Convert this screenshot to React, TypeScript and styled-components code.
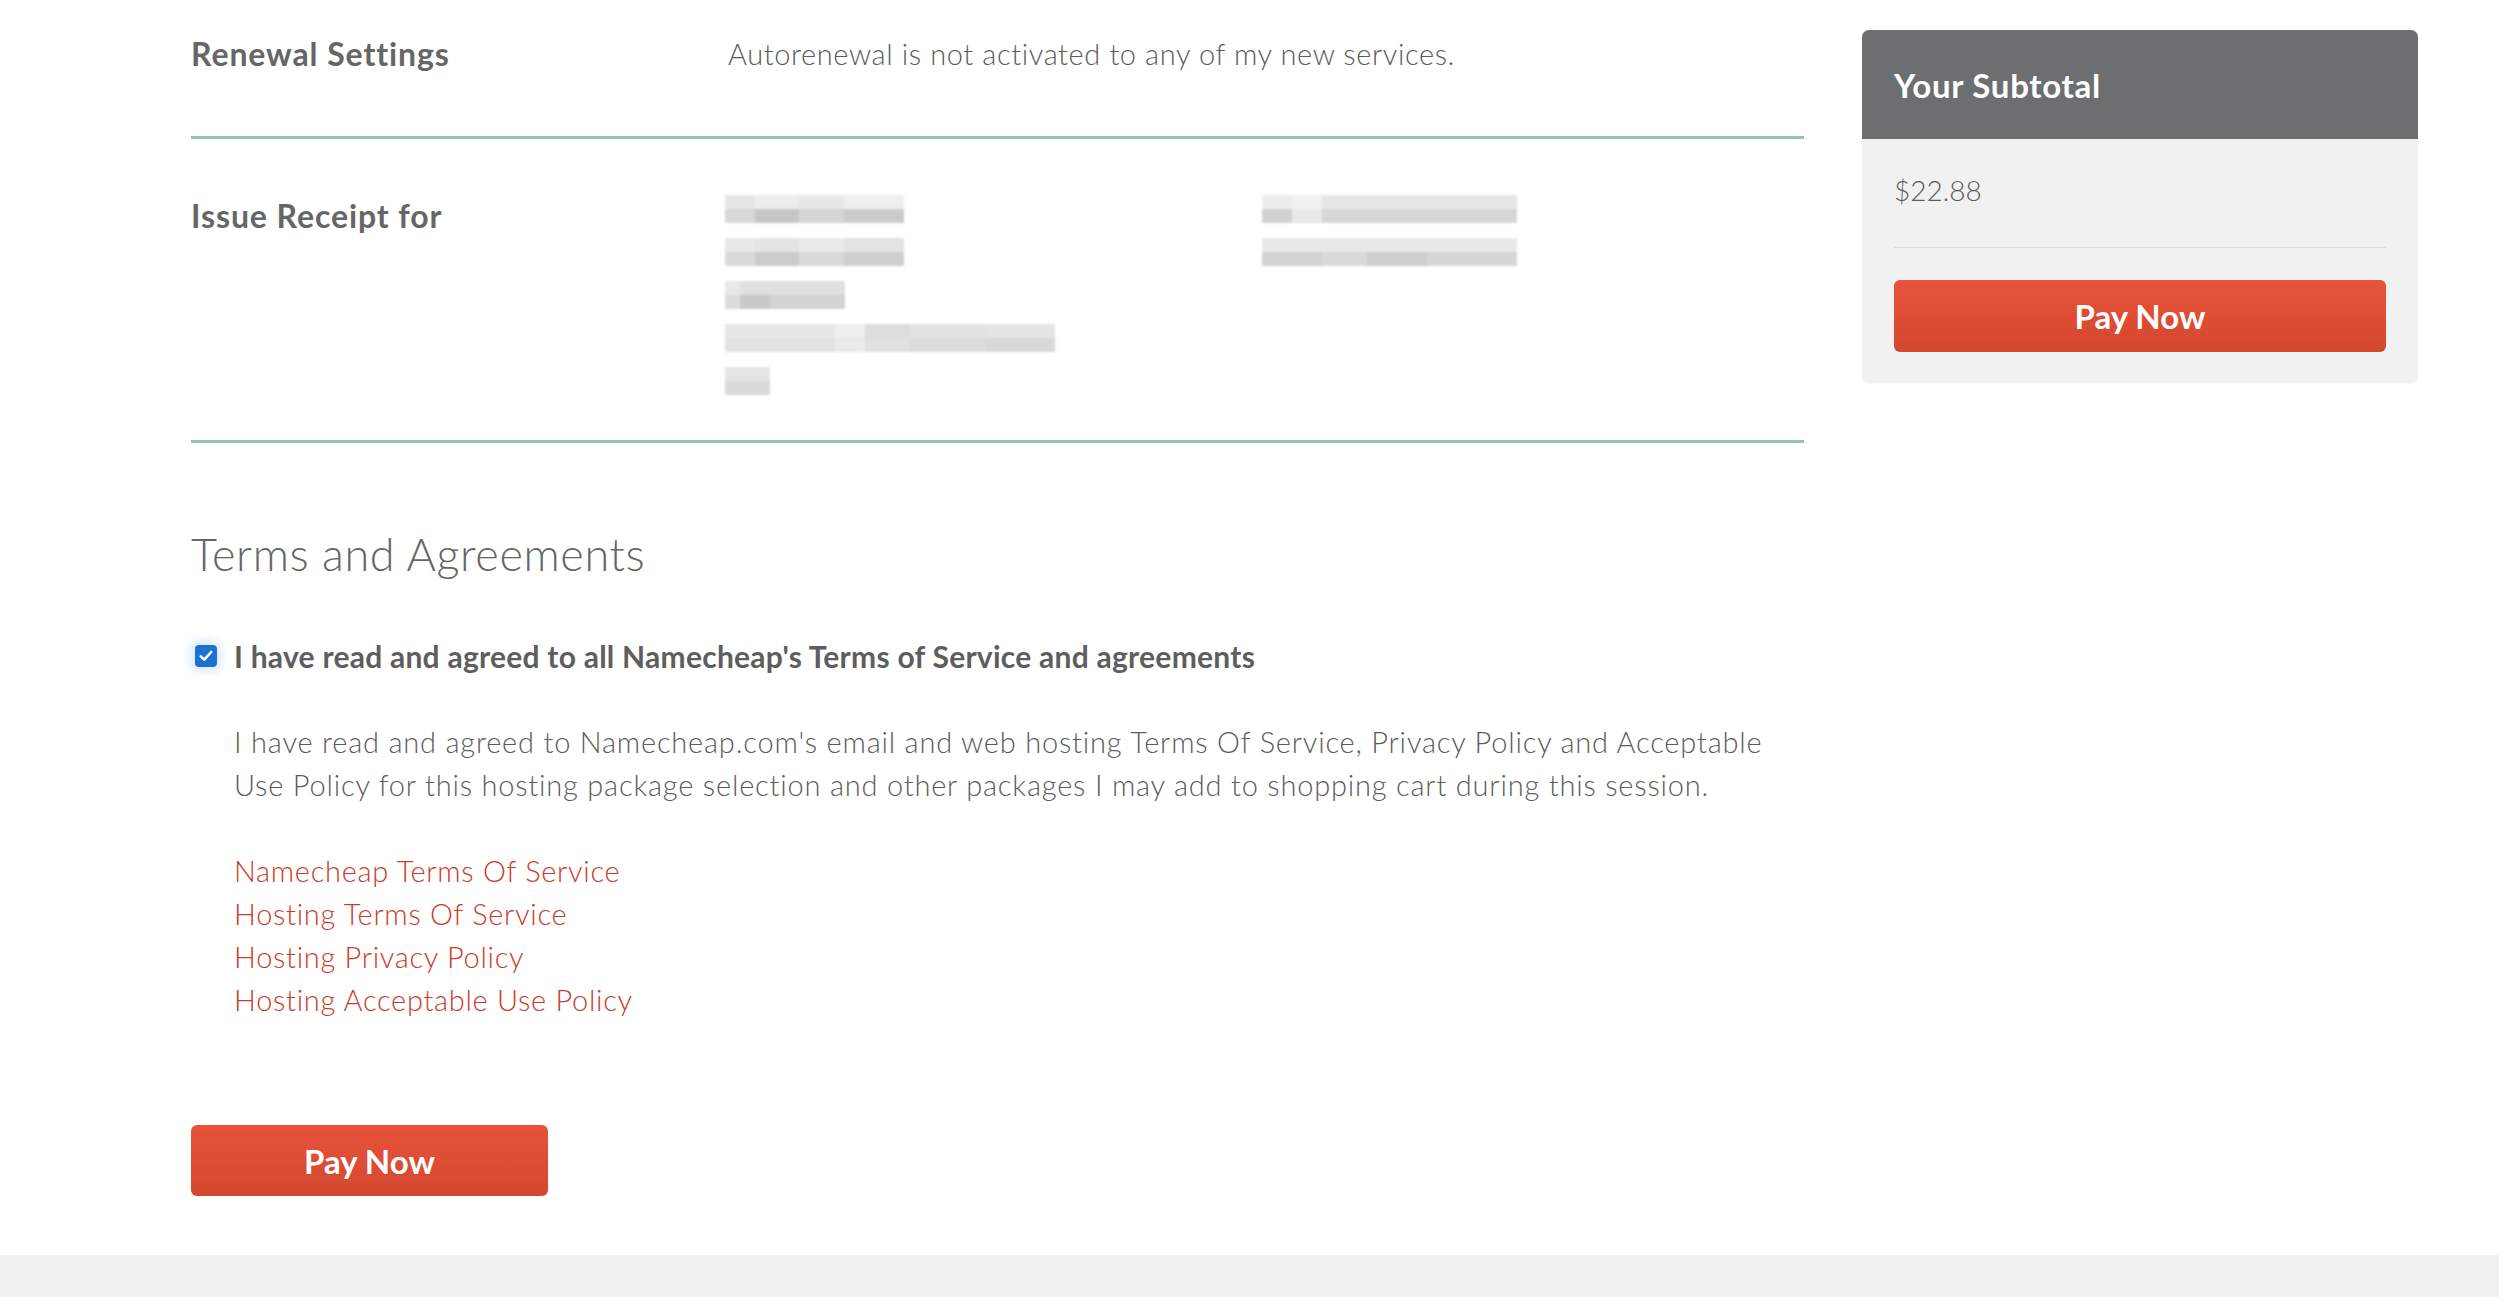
import styled, { createGlobalStyle } from "styled-components";

const GlobalStyle = createGlobalStyle`
  html, body {
    margin: 0;
    padding: 0;
    background: #fff;
  }
  body {
    font-family: Lato, "Noto Sans", sans-serif;
    color: #666;
  }
`;

const Page = styled.div`
  min-height: 1297px;
  display: flex;
  flex-direction: column;
`;

const Container = styled.div`
  display: flex;
  gap: 58px;
  padding: 0 81px 0 191px;
  flex: 1;
`;

const Main = styled.main`
  flex: 1;
  display: flex;
  flex-direction: column;
`;

const Row = styled.section<{ $pt: number; $pb: number }>`
  display: grid;
  grid-template-columns: 537px 1fr;
  padding: ${({ $pt }) => $pt}px 0 ${({ $pb }) => $pb}px;
  border-bottom: 3px solid #92c1c0;
`;

const RowLabel = styled.h3`
  margin: 0;
  font-size: 32px;
  line-height: 42px;
  font-weight: 700;
  letter-spacing: 0.9px;
  color: #666;
`;

const RowValue = styled.p`
  margin: 0;
  font-size: 29px;
  line-height: 42px;
  font-weight: 300;
  letter-spacing: 0.6px;
  color: #5c5c5c;
`;

const ReceiptCols = styled.div`
  display: grid;
  grid-template-columns: 537px 1fr;
  margin-left: -3px;
`;

const BlurList = styled.div`
  display: flex;
  flex-direction: column;
  gap: 15px;
`;

const BlurLine = styled.div`
  display: flex;
  flex-direction: column;
  filter: blur(0.8px);
`;

const BlurStrip = styled.div`
  display: flex;
  height: 14px;
`;

const BlurCell = styled.span<{ $w: number; $c: string }>`
  width: ${({ $w }) => $w}px;
  background: ${({ $c }) => $c};
`;

const TermsTitle = styled.h2`
  margin: 84px 0 0;
  font-size: 45px;
  line-height: 54px;
  font-weight: 300;
  letter-spacing: 0.6px;
  color: #666;
`;

const AgreeRow = styled.label`
  display: flex;
  align-items: center;
  gap: 17px;
  margin-top: 54px;
  padding-left: 4px;
  cursor: pointer;
`;

const HiddenInput = styled.input`
  position: absolute;
  opacity: 0;
  width: 0;
  height: 0;
`;

const CheckBox = styled.span`
  width: 22px;
  height: 22px;
  border-radius: 4px;
  background: #1b72d6;
  display: flex;
  align-items: center;
  justify-content: center;
  box-shadow: 0 0 8px 5px rgba(27, 114, 214, 0.14);
  flex-shrink: 0;
`;

const AgreeText = styled.span`
  font-size: 30px;
  line-height: 42px;
  font-weight: 700;
  letter-spacing: 0.25px;
  color: #5e5e5e;
`;

const TermsBody = styled.div`
  padding-left: 43px;
  margin-top: 43px;
`;

const Paragraph = styled.p`
  margin: 0;
  font-size: 29px;
  line-height: 43px;
  font-weight: 300;
  letter-spacing: 0.8px;
  color: #5c5c5c;
  max-width: 1570px;
`;

const LinkList = styled.ul`
  list-style: none;
  margin: 43px 0 0;
  padding: 0;
`;

const TermsLink = styled.a`
  display: block;
  font-size: 29px;
  line-height: 43px;
  font-weight: 300;
  letter-spacing: 0.7px;
  color: #cc3b27;
  text-decoration: none;
`;

const PayButton = styled.button<{ $block?: boolean }>`
  display: flex;
  align-items: center;
  justify-content: center;
  width: ${({ $block }) => ($block ? "100%" : "357px")};
  height: ${({ $block }) => ($block ? "72px" : "71px")};
  border: 0;
  border-radius: 6px;
  background: linear-gradient(180deg, #e8533a 0%, #d3472f 100%);
  color: #fff;
  font-family: Lato, "Noto Sans", sans-serif;
  font-size: 33px;
  font-weight: 700;
  cursor: pointer;
`;

const BottomPay = styled.div`
  margin-top: 104px;
  margin-bottom: 59px;
`;

const Sidebar = styled.aside`
  width: 556px;
  padding-top: 30px;
`;

const Card = styled.div`
  border-radius: 7px;
  overflow: hidden;
  background: #f1f1f1;
  box-shadow: 0 1px 2px rgba(0, 0, 0, 0.04);
`;

const CardHeader = styled.div`
  height: 109px;
  background: #6d6e6f;
  display: flex;
  align-items: center;
  padding: 0 32px;
  font-size: 33px;
  font-weight: 700;
  letter-spacing: 0.7px;
  color: #fff;
`;

const CardBody = styled.div`
  padding: 30px 32px 31px;
`;

const Amount = styled.div`
  font-size: 28px;
  line-height: 42px;
  font-weight: 300;
  color: #5c5c5c;
  padding-bottom: 36px;
  border-bottom: 1px solid #dadada;
  margin-bottom: 32px;
`;

const Footer = styled.footer`
  height: 43px;
  background: #f1f1f1;
`;

type Cell = [number, string];

const receiptLeft: Cell[][][] = [
  [
    [[30, "#e6e6e6"], [44, "#ededed"], [45, "#e8e8e8"], [60, "#efefef"]],
    [[30, "#d8d8d8"], [44, "#c6c6c6"], [45, "#d6d6d6"], [60, "#cbcbcb"]],
  ],
  [
    [[30, "#e8e8e8"], [44, "#e4e4e4"], [45, "#eaeaea"], [60, "#e3e3e3"]],
    [[30, "#dadada"], [44, "#cbcbcb"], [45, "#d9d9d9"], [60, "#cfcfcf"]],
  ],
  [
    [[15, "#e8e8e8"], [30, "#e0e0e0"], [75, "#dfdfdf"]],
    [[15, "#dcdcdc"], [30, "#c9c9c9"], [75, "#d3d3d3"]],
  ],
  [
    [[110, "#e6e6e6"], [30, "#eeeeee"], [45, "#dddddd"], [75, "#e2e2e2"], [70, "#e5e5e5"]],
    [[110, "#e2e2e2"], [30, "#eaeaea"], [45, "#e0e0e0"], [75, "#dcdcdc"], [70, "#d8d8d8"]],
  ],
  [
    [[45, "#e5e5e5"]],
    [[45, "#dadada"]],
  ],
];

const receiptRight: Cell[][][] = [
  [
    [[30, "#ededed"], [30, "#f1f1f1"], [195, "#e6e6e6"]],
    [[30, "#d2d2d2"], [30, "#e9e9e9"], [195, "#d7d7d7"]],
  ],
  [
    [[255, "#e9e9e9"]],
    [[60, "#d2d2d2"], [45, "#d9d9d9"], [60, "#cecece"], [90, "#d6d6d6"]],
  ],
];

function Blurred({ lines }: { lines: Cell[][][] }) {
  return (
    <BlurList>
      {lines.map((strips, i) => (
        <BlurLine key={i}>
          {strips.map((cells, j) => (
            <BlurStrip key={j}>
              {cells.map(([w, c], k) => (
                <BlurCell key={k} $w={w} $c={c} />
              ))}
            </BlurStrip>
          ))}
        </BlurLine>
      ))}
    </BlurList>
  );
}

const links = [
  "Namecheap Terms Of Service",
  "Hosting Terms Of Service",
  "Hosting Privacy Policy",
  "Hosting Acceptable Use Policy",
];

export default function App() {
  return (
    <Page>
      <GlobalStyle />
      <Container>
        <Main>
          <Row $pt={33} $pb={61}>
            <RowLabel>Renewal Settings</RowLabel>
            <RowValue>Autorenewal is not activated to any of my new services.</RowValue>
          </Row>
          <Row $pt={56} $pb={45}>
            <RowLabel>Issue Receipt for</RowLabel>
            <ReceiptCols>
              <Blurred lines={receiptLeft} />
              <Blurred lines={receiptRight} />
            </ReceiptCols>
          </Row>

          <TermsTitle>Terms and Agreements</TermsTitle>

          <AgreeRow>
            <HiddenInput type="checkbox" defaultChecked />
            <CheckBox>
              <svg width="14" height="12" viewBox="0 0 14 12" fill="none">
                <path
                  d="M1.8 6.4 L5.3 9.6 L12.2 2"
                  stroke="#fff"
                  strokeWidth="2.6"
                  strokeLinecap="round"
                  strokeLinejoin="round"
                />
              </svg>
            </CheckBox>
            <AgreeText>
              I have read and agreed to all Namecheap's Terms of Service and agreements
            </AgreeText>
          </AgreeRow>

          <TermsBody>
            <Paragraph>
              I have read and agreed to Namecheap.com's email and web hosting Terms Of Service,
              Privacy Policy and Acceptable Use Policy for this hosting package selection and
              other packages I may add to shopping cart during this session.
            </Paragraph>
            <LinkList>
              {links.map((l) => (
                <li key={l}>
                  <TermsLink href="#">{l}</TermsLink>
                </li>
              ))}
            </LinkList>
          </TermsBody>

          <BottomPay>
            <PayButton>Pay Now</PayButton>
          </BottomPay>
        </Main>

        <Sidebar>
          <Card>
            <CardHeader>Your Subtotal</CardHeader>
            <CardBody>
              <Amount>$22.88</Amount>
              <PayButton $block>Pay Now</PayButton>
            </CardBody>
          </Card>
        </Sidebar>
      </Container>
      <Footer />
    </Page>
  );
}
